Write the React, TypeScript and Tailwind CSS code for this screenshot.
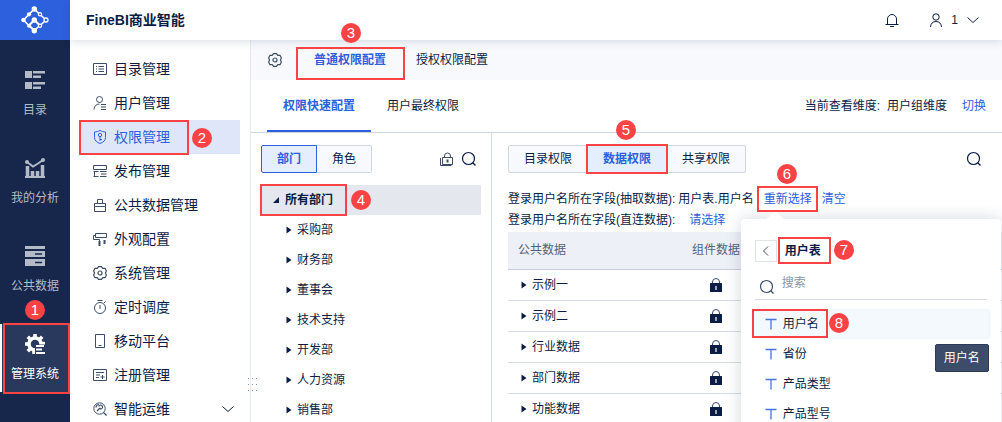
import type { ReactNode } from 'react';

type IconProps = { children: ReactNode; className?: string; size?: number; box?: number };

function Icon({ children, className = '', size = 14, box = 14 }: IconProps) {
  return (
    <svg
      width={size}
      height={size}
      viewBox={`0 0 ${box} ${box}`}
      fill="none"
      stroke="currentColor"
      strokeWidth="1"
      aria-hidden="true"
      className={`shrink-0 ${className}`}
    >
      {children}
    </svg>
  );
}

const Gear = ({ className = '' }: { className?: string }) => (
  <Icon className={className}>
    <path
      d="M5.5.6h3l1.200 1.700H12L13.400 5l-1 2 1 2L12 11.700H9.700L8.500 13.400h-3L4.300 11.700H2L.600 9l1-2-1-2L2 2.300h2.300z"
      strokeLinejoin="round"
      strokeWidth="1.200"
    />
    <circle cx="7" cy="7" r="2" strokeWidth="1.200" />
  </Icon>
);

const SearchIcon = ({ className = '' }: { className?: string }) => (
  <Icon className={className} size={16} box={16}>
    <circle cx="7.500" cy="7.500" r="6" strokeWidth="1.200" />
    <path d="M11.800 11.800l2.700 2.700" strokeWidth="1.300" />
  </Icon>
);

const Caret = () => (
  <svg width="6" height="8" viewBox="0 0 6 8" className="shrink-0 fill-[#0b1d45]" aria-hidden="true">
    <path d="M.5.5L5.500 4 .500 7.500z" />
  </svg>
);

const PadLock = () => (
  <svg width="14" height="14" viewBox="0 0 14 14" className="inline-block align-middle" aria-hidden="true">
    <path d="M3.500 6V4a3.500 3.500 0 0 1 7 0v2" fill="none" stroke="#3d4d69" />
    <rect x="1" y="5" width="12" height="9" rx=".5" fill="#0b1d45" />
    <path d="M7 8v4" stroke="#fff" strokeWidth="1.200" />
  </svg>
);

const Logo = () => (
  <svg width="28" height="28" viewBox="0 0 28 28" fill="none" stroke="#fff" strokeWidth="1.600" role="img" aria-label="FineBI">
    <path d="M2.500 14l10.800-11 5 5M2.500 14l5.500 5.700M13.300 24.700l5-5M19.500 9l4 3.500M19.500 19l4-3.500" />
    <path d="M8 19.500l5.300-5.500 5.200 5M8 19.500l5.300 5" strokeWidth="2" />
    <g fill="#fff" stroke="none">
      <circle cx="2.500" cy="14" r="2.300" />
      <circle cx="13.300" cy="3" r="2.700" />
      <circle cx="13.300" cy="24.700" r="2.700" />
      <circle cx="13.300" cy="14" r="2.700" />
      <circle cx="8" cy="8.300" r="2.100" />
      <circle cx="8" cy="19.700" r="2" />
    </g>
    <g fill="#2c60dc" strokeWidth="1.300">
      <circle cx="19" cy="8.300" r="1.600" />
      <circle cx="25" cy="14" r="2" />
      <circle cx="19" cy="19.700" r="1.600" />
    </g>
  </svg>
);

const railItems = [
  {
    label: '目录',
    icon: (
      <g fill="currentColor" stroke="none">
        <path d="M0 1h7v7H0zM0 12h7v7H0zM8 1h12v2.500H8zM8 5.500h8V8H8zM8 12h12v2.500H8zM8 16.500h8V19H8z" />
      </g>
    ),
  },
  {
    label: '我的分析',
    icon: (
      <>
        <path d="M0 19h20" strokeWidth="2" />
        <path d="M2.500 19V8M7.500 19v-6M12.500 19v-6M17.500 19V7" strokeWidth="3.500" />
        <path d="M2 4l6 4.500L13 5.500l5-3.500" strokeWidth="2" />
        <g fill="currentColor" stroke="none">
          <circle cx="2" cy="4" r="2" />
          <circle cx="18" cy="2" r="2" />
        </g>
      </>
    ),
  },
  {
    label: '公共数据',
    icon: (
      <>
        <path d="M0 0h20v3H0zM0 5h20v6H0zM0 13h20v7H0z" fill="currentColor" stroke="none" />
        <path d="M10 8h7M10 16.500h7" stroke="#16274b" strokeWidth="1.500" />
      </>
    ),
  },
  {
    label: '管理系统',
    icon: (
      <>
        <circle cx="10" cy="10" r="6" strokeWidth="3.500" />
        <path d="M10 0v3M2.800 2.800L5 5M0 10h3M2.800 17.200L5 15M17.200 2.800L15 5M9 20v-4M17 9.500h3" strokeWidth="3.600" />
        <path d="M10 10.500h10V20H10z" fill="#29395d" stroke="none" />
        <path d="M11 12h8M11 15.500h6M11 19h9" strokeWidth="2" />
      </>
    ),
    active: true,
  },
];

const menuItems: { label: string; icon: ReactNode; active?: boolean; expandable?: boolean }[] = [
  {
    label: '目录管理',
    icon: <Icon><path d="M.5 1.500h13v11H.500zM3 4.500h1M5.500 4.500H11M3 7h1M5.500 7H11M3 9.500h1M5.500 9.500H11" /></Icon>,
  },
  {
    label: '用户管理',
    icon: <Icon><circle cx="6.500" cy="3.500" r="3" /><path d="M1 13.500C1 10 3.500 8 6.500 8M8 8.500h5M8 11h5M8 13.500h5" /></Icon>,
  },
  {
    label: '权限管理',
    active: true,
    icon: <Icon><path d="M7 .5c2 1 3.500 1.300 5.500 1.500v5.500c0 3-2.500 5-5.500 6-3-1-5.500-3-5.500-6V2C3.500 1.800 5 1.500 7 .5z" /><circle cx="7" cy="5" r="1.700" /><path d="M7 6.700v4.300M7 9.500h2" /></Icon>,
  },
  {
    label: '发布管理',
    icon: <Icon><path d="M.5 1.500h13v4H.500zM.500 7.500h5M.500 12.500h5M1.500 7.500v5M7 7.500h6.500M8 10h5.500M7 12.500h6.500" /></Icon>,
  },
  {
    label: '公共数据管理',
    icon: <Icon><path d="M1.500 5.500h11v8h-11zM4.500 5.500v-4h5v4M1 8.500h12" /></Icon>,
  },
  {
    label: '外观配置',
    icon: <Icon><path d="M2.500 1.500h11v4h-11zM2.500 3.500h-2v4h6v2" /><path d="M6.500 9v5M11.500 8v4" strokeWidth="2" /></Icon>,
  },
  { label: '系统管理', icon: <Gear /> },
  {
    label: '定时调度',
    icon: <Icon><circle cx="7" cy="8" r="5.500" /><path d="M4.500.5h5M7 5v4M11 3l1.500-1.500" /></Icon>,
  },
  {
    label: '移动平台',
    icon: <Icon><path d="M2.500.5h9v13h-9zM5.500 11.500h3" /></Icon>,
  },
  {
    label: '注册管理',
    icon: <Icon><path d="M.5 1.500h13v11H.500zM3 4.500h8M3 7h4M3 9.500h3M7.500 9h4M9.500 7v4" /></Icon>,
  },
  {
    label: '智能运维',
    expandable: true,
    icon: <Icon><circle cx="6.500" cy="6.500" r="5.700" /><path d="M10.500 10.500L13.500 13.500M4 9l3-3M6 4.500c0-2 3-2 3.500 0S8 7.500 7 6.500M3 5.500c0-2 1.500-3 3-3" strokeWidth="1.200" /></Icon>,
  },
];

const departments = ['采购部', '财务部', '董事会', '技术支持', '开发部', '人力资源', '销售部'];
const dataSets = ['示例一', '示例二', '行业数据', '部门数据', '功能数据'];
const fields = ['用户名', '省份', '产品类型', '产品型号'];

const callouts = [
  { box: 'left-[3px] top-[323px] w-[67px] h-[71px]', badge: 'left-[25px] top-[300px]' },
  { box: 'left-[79px] top-[120px] w-[110px] h-[35px]', badge: 'left-[192px] top-[128px]' },
  { box: 'left-[296px] top-[47px] w-[109px] h-[33px]', badge: 'left-[341px] top-[23px]' },
  { box: 'left-[260px] top-[184px] w-[87px] h-[32px]', badge: 'left-[351px] top-[190px]' },
  { box: 'left-[586px] top-[144px] w-[82px] h-[30px]', badge: 'left-[616px] top-[120px]' },
  { box: 'left-[757px] top-[186px] w-[61px] h-[26px]', badge: 'left-[777px] top-[164px]' },
  { box: 'left-[778px] top-[237px] w-[53px] h-[27px]', badge: 'left-[834px] top-[240px]' },
  { box: 'left-[752px] top-[309px] w-[76px] h-[29px]', badge: 'left-[829px] top-[313px]' },
];

function Rail() {
  return (
    <nav className="flex w-[70px] shrink-0 flex-col bg-[#16274b]">
      <a href="#home" className="mb-5 flex h-10 items-center justify-center bg-[#2c60dc]">
        <Logo />
      </a>
      <div className="flex flex-col gap-5">
        {railItems.map((item) => (
          <a
            key={item.label}
            href="#rail"
            className={`flex h-[68px] flex-col items-center gap-[11px] border-x-2 border-r-transparent pt-2.5 leading-[18px] ${
              item.active ? 'border-l-white bg-[#29395d] text-white' : 'border-l-transparent text-[#b3bac8]'
            }`}
          >
            <Icon size={20} box={20}>{item.icon}</Icon>
            <span>{item.label}</span>
          </a>
        ))}
      </div>
    </nav>
  );
}

function Header() {
  return (
    <header className="relative z-10 flex h-10 shrink-0 items-center justify-between bg-white pr-[22px] pl-4 shadow-[0_2px_8px_rgba(20,40,80,0.14)]">
      <h1 className="text-sm font-bold">FineBI商业智能</h1>
      <div className="flex items-center">
        <button aria-label="消息" className="mr-[30px]">
          <Icon>
            <path d="M2.500 11V6a4.500 4.500 0 0 1 9 0v5M.500 11.500h13M5 13.500h4" />
          </Icon>
        </button>
        <button className="flex items-center gap-2">
          <Icon>
            <circle cx="7" cy="4" r="3.200" />
            <path d="M1.500 14c0-3.500 2.500-5.500 5.500-5.500s5.500 2 5.500 5.500" />
          </Icon>
          <span>1</span>
          <Icon>
            <path d="M1.500 4.500L7 9.500l5.500-5" />
          </Icon>
        </button>
      </div>
    </header>
  );
}

function SideMenu() {
  return (
    <nav className="flex w-[180px] shrink-0 flex-col bg-white px-2.5 pt-3 text-sm">
      {menuItems.map((item) => (
        <a
          key={item.label}
          href="#menu"
          className={`flex h-[34px] shrink-0 items-center gap-[7px] pr-[5px] pl-[13px] ${
            item.active ? 'bg-[#e0e6fa] text-[#2c60dc]' : ''
          }`}
        >
          <span className={item.active ? '' : 'text-[#3d4d69]'}>{item.icon}</span>
          <span className="flex-1">{item.label}</span>
          {item.expandable && (
            <Icon>
              <path d="M1.500 4.500L7 9.500l5.500-5" />
            </Icon>
          )}
        </a>
      ))}
    </nav>
  );
}

function DepartmentPanel() {
  return (
    <section className="w-[241px] shrink-0 border-r border-[#d5dae2] px-2.5 pt-3">
      <div className="flex items-center">
        <div className="flex">
          <button className="h-7 w-14 rounded-l-xs border border-[#2c60dc] bg-[#e5eefe] font-bold text-[#2c60dc]">部门</button>
          <button className="h-7 w-[55px] rounded-r-xs border border-l-0 border-[#d0d6e1] bg-[#f7f9fd]">角色</button>
        </div>
        <button aria-label="锁定" className="ml-auto text-[#3d4d69]">
          <Icon>
            <path d="M3.500 5.500h10v7h-10zM5.500 5.500V4a3 3 0 0 1 6 0v1.500M1.500 6v7.500h11" />
            <path d="M8.500 7.500v3" strokeWidth="2" />
          </Icon>
        </button>
        <button aria-label="搜索部门" className="mr-1 ml-2">
          <SearchIcon />
        </button>
      </div>
      <div className="mt-3">
        <div className="flex h-[30px] items-center gap-1.5 bg-[#e4e7ee] pl-3 font-bold">
          <svg width="6" height="6" viewBox="0 0 6 6" className="fill-[#0b1d45]" aria-hidden="true">
            <path d="M6 0v6H0z" />
          </svg>
          所有部门
        </div>
        <ul>
          {departments.map((name) => (
            <li key={name} className="flex h-[30px] items-center gap-[5px] pl-[25px]">
              <Caret />
              {name}
            </li>
          ))}
        </ul>
      </div>
    </section>
  );
}

function FieldPicker() {
  return (
    <div className="absolute top-[29px] -left-[23px] z-20 h-80 w-[260px] rounded-sm bg-white pt-[21px] shadow-[0_0_16px_rgba(20,40,80,0.18)]">
      <span className="absolute -top-1.5 left-7 h-3 w-3 rotate-45 bg-white" />
      <div className="flex items-center gap-2 pl-3.5">
        <button aria-label="返回" className="flex h-[22px] w-[22px] items-center justify-center border border-[#dfe3ea] text-[#3d4d69]">
          <Icon>
            <path d="M9 2.500L4.500 7 9 11.500" />
          </Icon>
        </button>
        <h2 className="font-bold">用户表</h2>
      </div>
      <label className="mx-3.5 mt-[7px] flex h-[31px] items-center gap-[7px] border-b border-[#d5dae2] pl-1">
        <SearchIcon className="mt-1.5 text-[#3d4d69]" />
        <input aria-label="搜索" placeholder="搜索" className="w-full pb-0.5 outline-none placeholder:text-[#8b94a6]" />
      </label>
      <ul className="mr-2.5 ml-[11px] mt-[9px]">
        {fields.map((name, i) => (
          <li key={name} className={`flex h-[30px] items-center gap-1.5 rounded-sm pl-[13px] ${i === 0 ? 'bg-[#f4f9fe]' : ''}`}>
            <svg width="12" height="12" viewBox="0 0 12 12" fill="none" stroke="#4574e3" aria-hidden="true">
              <path d="M.500 1.500h11M6 2v9.500" strokeWidth="1.300" />
            </svg>
            {name}
          </li>
        ))}
      </ul>
      <div role="tooltip" className="absolute top-[125px] right-3 flex h-7 w-[54px] items-center justify-center rounded-xs border border-[#2c3c58] bg-[#3d4d69] text-white">
        用户名
      </div>
    </div>
  );
}

function DataPanel() {
  return (
    <section className="min-w-0 flex-1 pt-3 pl-4">
      <div className="flex items-center justify-between pr-5">
        <div className="flex rounded-xs border border-[#d0d6e1] bg-[#f7f9fd]">
          <button className="h-[26px] w-[78px]">目录权限</button>
          <button className="h-[26px] w-20 bg-[#e5eefe] font-bold text-[#2c60dc]">数据权限</button>
          <button className="h-[26px] w-[78px]">共享权限</button>
        </div>
        <button aria-label="搜索数据">
          <SearchIcon />
        </button>
      </div>
      <div className="mt-[15px] flex h-[21px] items-center gap-2.5 whitespace-nowrap">
        <span className="flex gap-[3px]">
          <span>登录用户名所在字段(抽取数据):</span>
          <span>用户表.用户名</span>
        </span>
        <div className="relative leading-[18px]">
          <button className="text-[#2c60dc]">重新选择</button>
          <FieldPicker />
        </div>
        <button className="text-[#2c60dc]">清空</button>
      </div>
      <div className="flex h-[21px] items-center gap-3.5 whitespace-nowrap">
        <span>登录用户名所在字段(直连数据):</span>
        <button className="text-[#2c60dc]">请选择</button>
      </div>
      <table className="mt-0.5 w-full table-fixed border-collapse text-left">
        <thead>
          <tr className="h-[37px] border-b border-[#c9cfda] bg-[#edf0f6] text-[#56627a]">
            <th className="w-[156px] pl-2.5 font-normal">公共数据</th>
            <th className="w-26 text-center font-normal">组件数据</th>
            <th aria-hidden="true" />
          </tr>
        </thead>
        <tbody>
          {dataSets.map((name) => (
            <tr key={name} className="h-[31px] border-b border-[#d5dae2]">
              <td className="pl-[13px]">
                <span className="flex items-center gap-[5px]">
                  <Caret />
                  {name}
                </span>
              </td>
              <td className="text-center">
                <PadLock />
              </td>
              <td />
            </tr>
          ))}
        </tbody>
      </table>
    </section>
  );
}

export default function App() {
  return (
    <div className="relative flex h-screen overflow-hidden bg-white font-['Liberation_Sans','Noto_Sans_CJK_SC',sans-serif] text-xs text-[#0b1d45]">
      <Rail />
      <div className="flex min-w-0 flex-1 flex-col">
        <Header />
        <div className="flex min-h-0 flex-1">
          <SideMenu />
          <main className="relative flex min-w-0 flex-1 flex-col border-l border-[#e4e8ef]">
            <svg width="10" height="14" viewBox="0 0 10 14" className="absolute top-[338px] -left-[3px] fill-[#8296ba]" aria-hidden="true">
              <path d="M0 0h1v1H0zM4 0h1v1H4zM8 0h1v1H8zM0 6h1v1H0zM4 6h1v1H4zM8 6h1v1H8zM0 12h1v1H0zM4 12h1v1H4zM8 12h1v1H8z" />
            </svg>
            <div className="flex h-10 shrink-0 items-center bg-[#f7f9fd] pl-[17px]">
              <button aria-label="设置" className="mr-[17px] text-[#3d4d69]">
                <Gear />
              </button>
              <button className="px-[15px] font-bold text-[#2c60dc]">普通权限配置</button>
              <button className="px-[15px]">授权权限配置</button>
            </div>
            <div className="flex h-[53px] shrink-0 items-stretch border-b border-[#cfd5df] pr-4 pl-4">
              <button className="border-y-2 border-t-transparent border-b-[#2c60dc] px-4 font-bold text-[#2c60dc]">权限快速配置</button>
              <button className="px-4">用户最终权限</button>
              <div className="ml-auto flex items-center">
                <span className="mr-[7px]">当前查看维度:</span>
                <span>用户组维度</span>
                <button className="ml-[15px] text-[#2c60dc]">切换</button>
              </div>
            </div>
            <div className="flex min-h-0 flex-1">
              <DepartmentPanel />
              <DataPanel />
            </div>
          </main>
        </div>
      </div>
      <div className="pointer-events-none absolute inset-0 z-30">
        {callouts.map((callout, i) => (
          <div key={callout.box}>
            <div className={`absolute border-2 border-[#fb4245] ${callout.box}`} />
            <div className={`absolute flex h-5 w-5 items-center justify-center rounded-full bg-[#fb4245] text-[15px] leading-5 text-white ${callout.badge}`}>
              {i + 1}
            </div>
          </div>
        ))}
      </div>
    </div>
  );
}
